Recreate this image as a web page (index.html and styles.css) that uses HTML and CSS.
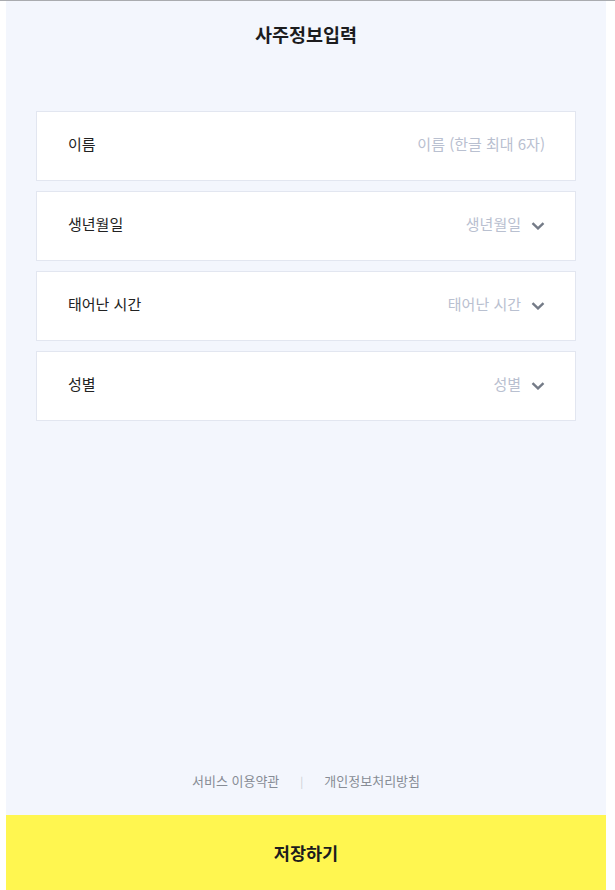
FILE: index.html
```html
<!DOCTYPE html>
<html lang="ko">
<head>
  <meta charset="UTF-8" />
  <meta name="viewport" content="width=device-width, initial-scale=1.0"/>
  <title>사주정보입력</title>
  <link rel="stylesheet" href="styles.css">
</head>
<body>

  <div class="page">
    <div class="header">사주정보입력</div>

    <div class="form">
      <div class="field">
        <span class="label">이름</span>
        <span class="value">이름 (한글 최대 6자)</span>
      </div>
      <div class="field">
        <span class="label">생년월일</span>
        <span class="value">생년월일</span>
        <svg class="chevron" viewBox="0 0 14 8" width="14" height="8"><path d="M1.5 1.2 L7 6.4 L12.5 1.2" /></svg>
      </div>
      <div class="field">
        <span class="label">태어난 시간</span>
        <span class="value">태어난 시간</span>
        <svg class="chevron" viewBox="0 0 14 8" width="14" height="8"><path d="M1.5 1.2 L7 6.4 L12.5 1.2" /></svg>
      </div>
      <div class="field">
        <span class="label">성별</span>
        <span class="value">성별</span>
        <svg class="chevron" viewBox="0 0 14 8" width="14" height="8"><path d="M1.5 1.2 L7 6.4 L12.5 1.2" /></svg>
      </div>
    </div>

    <div class="links">
      <a href="#">서비스 이용약관</a>
      <span class="sep">|</span>
      <a href="#">개인정보처리방침</a>
    </div>

    <button class="save">저장하기</button>
  </div>

</body>
</html>
```

FILE: styles.css
```css
body {
  margin: 0;
  background: #fff;
  border-top: 1px solid #a9abaf;
  font-family: "Noto Sans CJK KR", "Noto Sans", sans-serif;
  color: #222;
}

.page {
  width: 600px;
  margin-left: 6px;
  min-height: 889px;
  background: #f3f6fd;
  display: flex;
  flex-direction: column;
}

.header {
  padding-top: 20px;
  line-height: 26px;
  font-size: 18.5px;
  font-weight: bold;
  text-align: center;
  color: #1c1c1e;
}

.form {
  margin: 64px 30px 0;
  display: flex;
  flex-direction: column;
  gap: 10px;
}

.field {
  height: 68px;
  background: #fff;
  border: 1px solid #e2e6f0;
  display: flex;
  align-items: center;
  padding: 0 30px 0 31px;
  font-size: 15px;
}

.label {
  flex: 1;
  color: #222;
  margin-bottom: 5px;
}

.value {
  color: #b9c0d0;
  margin-bottom: 5px;
}

.chevron {
  margin-left: 10px;
  fill: none;
  stroke: #747b87;
  stroke-width: 2.4;
}

.links {
  margin-top: auto;
  padding-bottom: 25px;
  display: flex;
  justify-content: center;
  align-items: center;
  font-size: 13px;
  line-height: 18px;
}

.links a {
  color: #878c95;
  text-decoration: none;
}

.links .sep {
  color: #c9ccd3;
  font-size: 11px;
  margin: 0 21px;
}

.save {
  height: 75px;
  border: none;
  background: #fff650;
  font-family: inherit;
  font-size: 17.5px;
  font-weight: bold;
  color: #1c1c1e;
  cursor: pointer;
}
```
